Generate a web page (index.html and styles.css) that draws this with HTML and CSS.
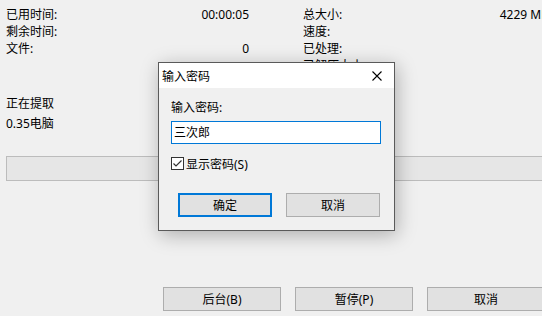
FILE: index.html
```html
<!DOCTYPE html>
<html lang="zh-CN">
<head>
    <meta charset="UTF-8">
    <title>正在提取</title>
    <link rel="stylesheet" href="styles.css">
</head>
<body>

    <div class="window">
        <div class="stats">
            <div class="stat"><span>已用时间:</span><span>00:00:05</span></div>
            <div class="stat"><span>总大小:</span><span>4229 MB</span></div>
            <div class="stat"><span>剩余时间:</span><span></span></div>
            <div class="stat"><span>速度:</span><span></span></div>
            <div class="stat"><span>文件:</span><span>0</span></div>
            <div class="stat"><span>已处理:</span><span>0</span></div>
            <div class="stat"><span></span><span></span></div>
            <div class="stat"><span>已解压大小:</span><span>0</span></div>
        </div>

        <div class="status">
            <div>正在提取</div>
            <div>0.35电脑</div>
        </div>

        <div class="progress"></div>

        <div class="actions">
            <button class="btn">后台(B)</button>
            <button class="btn">暂停(P)</button>
            <button class="btn">取消</button>
        </div>
    </div>

    <div class="dialog">
        <div class="dialog-title">
            <span>输入密码</span>
            <svg class="close" width="10" height="10" viewBox="0 0 10 10">
                <path d="M0.5 0.5 L9.5 9.5 M9.5 0.5 L0.5 9.5" stroke="#000" stroke-width="1.1" fill="none"/>
            </svg>
        </div>
        <div class="dialog-body">
            <div class="field-label">输入密码:</div>
            <div class="field">三次郎</div>
            <label class="check">
                <svg class="box" width="13" height="13" viewBox="0 0 13 13">
                    <rect x="0.5" y="0.5" width="12" height="12" fill="#fff" stroke="#333"/>
                    <path d="M2.5 6.5 L5 9 L10.5 3.5" stroke="#333" stroke-width="1.2" fill="none"/>
                </svg>
                <span>显示密码(S)</span>
            </label>
            <div class="dialog-buttons">
                <button class="btn default">确定</button>
                <button class="btn">取消</button>
            </div>
        </div>
    </div>

</body>
</html>
```

FILE: styles.css
```css
html, body {
    margin: 0;
    overflow: hidden;
}
body {
    font-family: "Noto Sans", "Noto Sans CJK SC", sans-serif;
    font-size: 12px;
    color: #000;
    background-color: #f0f0f0;
    width: 542px;
    height: 316px;
    position: relative;
}
.window {
    width: 557px;
}
.stats {
    display: grid;
    grid-template-columns: 243px 246px;
    column-gap: 54px;
    padding: 6px 0 0 6px;
}
.stat {
    display: flex;
    justify-content: space-between;
    height: 17px;
    line-height: 17px;
    white-space: nowrap;
}
.status {
    margin-top: 20px;
    padding-left: 6px;
    line-height: 20px;
}
.progress {
    margin: 22px 6px 0 6px;
    height: 23px;
    background: #e6e6e6;
    border: 1px solid #bcbcbc;
}
.actions {
    display: flex;
    justify-content: flex-end;
    gap: 14px;
    margin-top: 106px;
    padding-right: 12px;
}
.btn {
    font-family: inherit;
    font-size: 12px;
    color: #000;
    width: 118px;
    height: 24px;
    padding: 0;
    background: #e1e1e1;
    border: 1px solid #adadad;
    border-radius: 0;
}
.dialog {
    position: absolute;
    left: 158px;
    top: 62px;
    width: 235px;
    height: 167px;
    background: #f0f0f0;
    border: 1px solid #5a5a5a;
    box-shadow: 2px 4px 18px rgba(0, 0, 0, 0.28);
}
.dialog-title {
    display: flex;
    justify-content: space-between;
    align-items: center;
    height: 25px;
    padding: 0 12px 0 3px;
    background: #fff;
}
.dialog-body {
    padding: 12px 12px 0 12px;
}
.field-label {
    line-height: 16px;
}
.field {
    margin-top: 5px;
    width: 206px;
    height: 21px;
    line-height: 21px;
    padding-left: 2px;
    background: #fff;
    border: 1px solid #0078d7;
}
.check {
    display: flex;
    align-items: center;
    gap: 2px;
    margin-top: 13px;
    height: 13px;
}
.dialog-buttons {
    display: flex;
    gap: 14px;
    margin-top: 23px;
    padding-left: 7px;
}
.dialog-buttons .btn {
    width: 94px;
}
.btn.default {
    border: 2px solid #0078d7;
}
```
